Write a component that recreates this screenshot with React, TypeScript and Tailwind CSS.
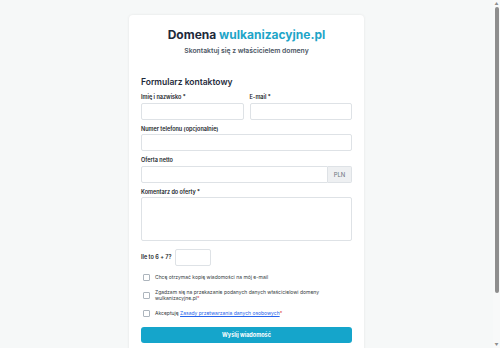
import React from 'react';

const Label: React.FC<{ children: React.ReactNode }> = ({ children }) => (
  <label className="block text-[5.5px] leading-[7px] font-semibold text-[#212529] mb-[1.5px]">{children}</label>
);

const inputCls = 'block w-full h-[17px] rounded-[2px] border border-[#dee2e6] bg-white';

const Check: React.FC<{ children: React.ReactNode; className?: string }> = ({ children, className }) => (
  <div className={`flex items-center gap-[5px] pl-[2px] ${className ?? ''}`}>
    <span className="w-[7px] h-[7px] shrink-0 rounded-[1px] border border-[#adb5bd] bg-white" />
    <span className="text-[5px] leading-[7px] text-[#343a40]">{children}</span>
  </div>
);

export default function App() {
  return (
    <div className="flex h-[348px] overflow-hidden bg-[#f6f8f8] font-['Inter','Noto_Sans',sans-serif]">
      <div className="flex-1 pt-[15px]">
        <div className="mx-auto w-[235px] rounded-[4px] bg-white shadow-[0_0_3px_rgba(0,0,0,0.08)] px-[12px] pt-[12px] pb-[40px]">
          <h1 className="text-center text-[12px] leading-[16px] font-bold text-[#1e2a3b]">
            Domena <span className="text-[#1ea5c8]">wulkanizacyjne.pl</span>
          </h1>
          <p className="mt-[3px] text-center text-[6.8px] leading-[9px] font-semibold text-[#4b5563]">
            Skontaktuj się z właścicielem domeny
          </p>

          <h2 className="mt-[21px] text-[8.5px] leading-[12px] font-semibold text-[#1e2a3b]">Formularz kontaktowy</h2>

          <div className="mt-[6px] flex gap-[6px]">
            <div className="flex-1">
              <Label>Imię i nazwisko *</Label>
              <div className={inputCls} />
            </div>
            <div className="flex-1">
              <Label>E-mail *</Label>
              <div className={inputCls} />
            </div>
          </div>

          <div className="mt-[6px]">
            <Label>Numer telefonu (opcjonalnie)</Label>
            <div className={inputCls} />
          </div>

          <div className="mt-[6px]">
            <Label>Oferta netto</Label>
            <div className="flex h-[17px]">
              <div className="flex-1 rounded-l-[2px] border border-[#dee2e6] bg-white" />
              <div className="w-[24px] flex items-center justify-center rounded-r-[2px] border border-l-0 border-[#dee2e6] bg-[#eef0f2] text-[6px] text-[#6c757d]">
                PLN
              </div>
            </div>
          </div>

          <div className="mt-[6px]">
            <Label>Komentarz do oferty *</Label>
            <div className="h-[44px] w-full rounded-[2px] border border-[#dee2e6] bg-white" />
          </div>

          <div className="mt-[8px] flex items-center gap-[4px]">
            <span className="text-[5.5px] leading-[7px] font-semibold text-[#212529]">Ile to 6 + 7?</span>
            <div className="h-[17px] w-[36px] rounded-[2px] border border-[#dee2e6] bg-white" />
          </div>

          <Check className="mt-[8px]">Chcę otrzymać kopię wiadomości na mój e-mail</Check>
          <Check className="mt-[8px]">
            <span className="block leading-[6px]">
              Zgadzam się na przekazanie podanych danych właścicielowi domeny
              <br />
              wulkanizacyjne.pl<span className="text-[#dc3545]">*</span>
            </span>
          </Check>
          <Check className="mt-[9px]">
            Akceptuję <span className="text-[#2563eb] underline">Zasady przetwarzania danych osobowych</span>
            <span className="text-[#dc3545]">*</span>
          </Check>

          <button className="mt-[10px] block w-full h-[16px] rounded-[3px] bg-[#15a5cb] text-[5.5px] font-bold text-white">
            Wyślij wiadomość
          </button>
        </div>
      </div>

      {/* scrollbar */}
      <div className="w-[7px] shrink-0 flex flex-col items-center bg-[#f8f9f9]">
        <span className="mt-[1px] text-[4px] leading-[5px] text-[#8e8e8e]">▲</span>
        <div className="mt-[1px] h-[286px] w-[4px] rounded-[2px] bg-[#8e8e8e]" />
        <span className="mt-auto mb-[1px] text-[4px] leading-[5px] text-[#8e8e8e]">▼</span>
      </div>
    </div>
  );
}
